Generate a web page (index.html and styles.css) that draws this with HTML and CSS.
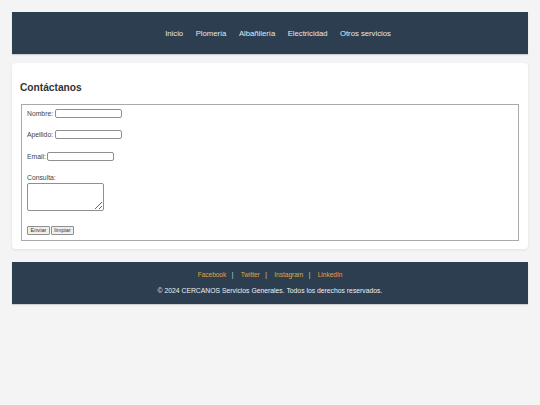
FILE: index.html
```html
<!DOCTYPE html>
<html lang="es">
<head>
<meta charset="utf-8">
<title>CERCANOS Servicios Generales - Contacto</title>
<link rel="stylesheet" href="styles.css">
</head>
<body>
<header class="site-header">
  <nav class="nav">
    <a href="#">Inicio</a>
    <a href="#">Plomería</a>
    <a href="#">Albañilería</a>
    <a href="#">Electricidad</a>
    <a href="#">Otros servicios</a>
  </nav>
</header>
<main class="card">
  <h2 class="title">Contáctanos</h2>
  <form class="form">
    <div class="row"><label>Nombre:</label><input class="field f-name" type="text"></div>
    <div class="row r2"><label>Apellido:</label><input class="field f-name" type="text"></div>
    <div class="row r3"><label>Email:</label><input class="field f-name" type="email"></div>
    <label class="lbl-block">Consulta:</label>
    <textarea class="area"></textarea>
    <div class="buttons">
      <button type="submit" class="btn">Enviar</button>
      <button type="reset" class="btn">limpiar</button>
    </div>
  </form>
</main>
<footer class="site-footer">
  <div class="links">
    <a href="#">Facebook</a><span class="sep">|</span>
    <a href="#">Twitter</a><span class="sep">|</span>
    <a href="#">Instagram</a><span class="sep">|</span>
    <a href="#">LinkedIn</a>
  </div>
  <p class="copy">© 2024 CERCANOS Servicios Generales. Todos los derechos reservados.</p>
</footer>
</body>
</html>
```
FILE: styles.css
```css
* { box-sizing: border-box; }
html, body { margin: 0; }
body {
  background: #f4f4f4;
  padding: 12px;
  font-family: "Liberation Sans", Arial, sans-serif;
  color: #333;
}
.site-header {
  background: #2c3e50;
  height: 42px;
  display: flex;
  align-items: center;
  justify-content: center;
  box-shadow: 0 1px 1px rgba(0,0,0,0.15);
}
.nav {
  display: flex;
  gap: 12.5px;
  margin-left: 16px;
}
.nav a {
  color: #e6e9ec;
  text-decoration: none;
  font-size: 7.7px;
  line-height: 9px;
}
.card {
  display: block;
  margin-top: 9px;
  background: #fff;
  border-radius: 4px;
  box-shadow: 0 1px 3px rgba(0,0,0,0.08);
  padding: 19px 9px 9px 9px;
  height: 186px;
}
.title {
  margin: 0 0 10px -1px;
  font-size: 10.2px;
  line-height: 12px;
  font-weight: bold;
  color: #333;
}
.form {
  border: 1px solid #a9a9a9;
  padding: 4px 5px 5px 5px;
  display: flex;
  flex-direction: column;
  align-items: flex-start;
  height: 137px;
}
.row {
  display: flex;
  align-items: center;
  height: 9px;
  font-size: 6.8px;
  color: #444;
}
.row label { margin-right: 1.5px; }
.r2 { margin-top: 12px; }
.r3 { margin-top: 13px; }
.field {
  height: 9px;
  border: 1px solid #8f8f8f;
  border-radius: 2px;
  padding: 0;
  background: #fff;
}
.f-name { width: 67px; }
.lbl-block {
  margin-top: 13px;
  font-size: 6.8px;
  line-height: 7px;
  color: #444;
}
.area {
  margin-top: 2px;
  width: 77px;
  height: 28px;
  border: 1px solid #8f8f8f;
  border-radius: 2px;
  padding: 0;
  resize: vertical;
}
.buttons {
  margin-top: 15px;
  display: flex;
  gap: 1px;
}
.btn {
  height: 9px;
  font-family: "Liberation Sans", Arial, sans-serif;
  font-size: 5.6px;
  line-height: 7px;
  padding: 0 2.5px;
  background: #efefef;
  border: 1px solid #8f8f8f;
  border-radius: 1px;
  color: #333;
}
.site-footer {
  margin-top: 13px;
  background: #2c3e50;
  height: 42px;
  padding-top: 9px;
  text-align: center;
  box-shadow: 0 1px 1px rgba(0,0,0,0.15);
}
.links {
  font-size: 6.5px;
  line-height: 8px;
}
.links a {
  color: #e5a33b;
  text-decoration: none;
}
.sep {
  color: #d5d9dd;
  margin: 0 5.5px;
}
.copy {
  margin: 8px 0 0 0;
  font-size: 6.8px;
  line-height: 8px;
  color: #eef0f2;
}
```
